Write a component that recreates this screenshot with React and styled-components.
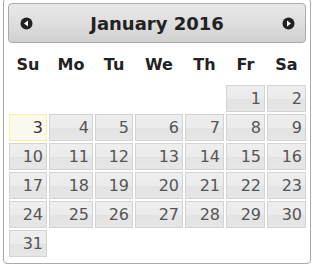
import React from "react";
import styled, { createGlobalStyle } from "styled-components";

const GlobalStyle = createGlobalStyle`
  body {
    margin: 0;
    background: #fff;
    font-family: "DejaVu Sans", Verdana, sans-serif;
  }
`;

const COLUMNS = "38px 44px 38px 48px 39px 39px 39px";
const WEEKDAYS = ["Su", "Mo", "Tu", "We", "Th", "Fr", "Sa"];
const FIRST_OFFSET = 5;
const DAYS_IN_MONTH = 31;
const TODAY = 3;

function Arrow({ dir }) {
  return (
    <svg width="13" height="13" viewBox="0 0 13 13">
      <circle cx="6.5" cy="6.5" r="6" fill="#222" />
      {dir === "prev" ? (
        <path d="M4 6.5 L8 3.5 L8 9.5 Z" fill="#fff" />
      ) : (
        <path d="M9 6.5 L5 3.5 L5 9.5 Z" fill="#fff" />
      )}
    </svg>
  );
}

function App() {
  const cells = [];
  for (let i = 0; i < FIRST_OFFSET; i++) cells.push(<Empty key={"e" + i} />);
  for (let d = 1; d <= DAYS_IN_MONTH; d++) {
    cells.push(
      <Day key={d} $today={d === TODAY}>
        {d}
      </Day>
    );
  }

  return (
    <>
      <GlobalStyle />
      <Widget>
        <Header>
          <NavButton>
            <Arrow dir="prev" />
          </NavButton>
          <Title>January 2016</Title>
          <NavButton>
            <Arrow dir="next" />
          </NavButton>
        </Header>
        <WeekRow>
          {WEEKDAYS.map((w) => (
            <WeekDay key={w}>{w}</WeekDay>
          ))}
        </WeekRow>
        <DayGrid>{cells}</DayGrid>
      </Widget>
    </>
  );
}

const Widget = styled.div`
  width: 298px;
  margin: -2px 0 0 3px;
  padding: 4px 4px 6px;
  border: 1px solid #aaaaaa;
  border-radius: 4px;
  background: #fff;
  color: #222;
  display: flex;
  flex-direction: column;
`;

const Header = styled.div`
  height: 38px;
  border: 1px solid #aaaaaa;
  border-radius: 4px;
  background: linear-gradient(to bottom, #e9e9e9 0%, #dedede 50%, #d0d0d0 100%);
  display: flex;
  align-items: center;
  justify-content: space-between;
  padding: 0 10px 0 11px;
`;

const NavButton = styled.span`
  width: 13px;
  height: 13px;
  display: flex;
  margin-top: 1px;
`;

const Title = styled.span`
  font-size: 18px;
  font-weight: 700;
  color: #222;
  margin-left: -1px;
`;

const WeekRow = styled.div`
  display: grid;
  grid-template-columns: ${COLUMNS};
  column-gap: 2px;
  height: 42px;
  align-items: center;
  padding-left: 1px;
`;

const WeekDay = styled.span`
  text-align: center;
  font-size: 16px;
  font-weight: 700;
  color: #222;
`;

const DayGrid = styled.div`
  display: grid;
  grid-template-columns: ${COLUMNS};
  grid-auto-rows: 27px;
  gap: 2px;
  padding-left: 1px;
`;

const Empty = styled.span``;

const Day = styled.span`
  box-sizing: border-box;
  border: 1px solid ${(p) => (p.$today ? "#fcefa1" : "#d3d3d3")};
  background: ${(p) =>
    p.$today
      ? "#fbf9ee"
      : "linear-gradient(to bottom, #eeeeee 0%, #ebebeb 50%, #e3e3e3 51%, #e6e6e6 100%)"};
  color: ${(p) => (p.$today ? "#363636" : "#555555")};
  font-size: 16px;
  line-height: 25px;
  text-align: right;
  padding-right: 3px;
`;

export default App;
